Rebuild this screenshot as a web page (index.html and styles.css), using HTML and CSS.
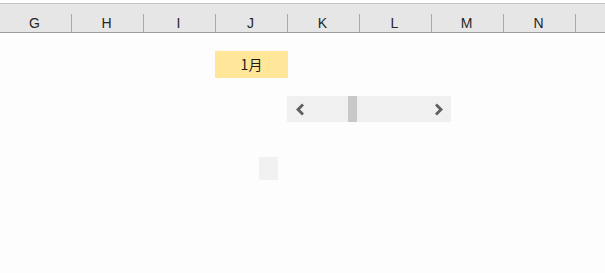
FILE: index.html
```html
<!DOCTYPE html>
<html lang="zh">
<head>
    <meta charset="UTF-8">
    <meta name="viewport" content="width=device-width, initial-scale=1.0">
    <title>Sheet</title>
    <link rel="stylesheet" href="styles.css">
</head>
<body>

    <div class="col-header">
        <div class="col">G</div>
        <div class="col">H</div>
        <div class="col">I</div>
        <div class="col">J</div>
        <div class="col">K</div>
        <div class="col">L</div>
        <div class="col">M</div>
        <div class="col">N</div>
        <div class="col"></div>
    </div>

    <div class="sheet">
        <div class="month-cell">1月</div>

        <div class="scrollbar">
            <div class="scroll-btn">
                <svg width="11" height="13" viewBox="0 0 11 13"><path d="M8 1.5 L3 6.5 L8 11.5" fill="none" stroke="#5f5f5f" stroke-width="2.8"/></svg>
            </div>
            <div class="scroll-track">
                <div class="scroll-thumb"></div>
            </div>
            <div class="scroll-btn right">
                <svg width="11" height="13" viewBox="0 0 11 13"><path d="M3 1.5 L8 6.5 L3 11.5" fill="none" stroke="#5f5f5f" stroke-width="2.8"/></svg>
            </div>
        </div>

        <div class="spin-box"></div>
    </div>

</body>
</html>
```

FILE: styles.css
```css
body {
    margin: 0;
    background-color: #fdfdfd;
    font-family: "Liberation Sans", Arial, sans-serif;
    overflow: hidden;
}
.col-header {
    display: flex;
    overflow: hidden;
    margin-top: 3px;
    height: 28px;
    background-color: #e6e6e6;
    border-top: 1px solid #c4c4c4;
    border-bottom: 1px solid #9e9e9e;
}
.col {
    flex: 0 0 72px;
    box-sizing: border-box;
    padding-top: 11px;
    padding-right: 3px;
    text-align: center;
    font-size: 14px;
    line-height: 16px;
    color: #262626;
    background: linear-gradient(#a9a9a9, #a9a9a9) right bottom / 1px 18px no-repeat;
}
.sheet {
    display: flex;
    flex-direction: column;
    align-items: flex-start;
}
.month-cell {
    margin-top: 18px;
    margin-left: 215px;
    width: 73px;
    height: 27px;
    background-color: #ffe699;
    color: #1c1c1c;
    font-family: "Noto Sans CJK SC", sans-serif;
    font-size: 14px;
    line-height: 27px;
    text-align: center;
}
.scrollbar {
    display: flex;
    margin-top: 18px;
    margin-left: 287px;
    width: 164px;
    height: 26px;
    background-color: #f0f0f0;
}
.scroll-btn {
    flex: 0 0 26px;
    display: flex;
    align-items: center;
    justify-content: center;
}
.scroll-btn.right {
    padding-left: 2px;
}
.scroll-track {
    flex: 1;
    padding-left: 35px;
}
.scroll-thumb {
    width: 9px;
    height: 26px;
    background-color: #c8c8c8;
}
.spin-box {
    margin-top: 35px;
    margin-left: 259px;
    width: 19px;
    height: 23px;
    background-color: #f1f1f1;
}
```
